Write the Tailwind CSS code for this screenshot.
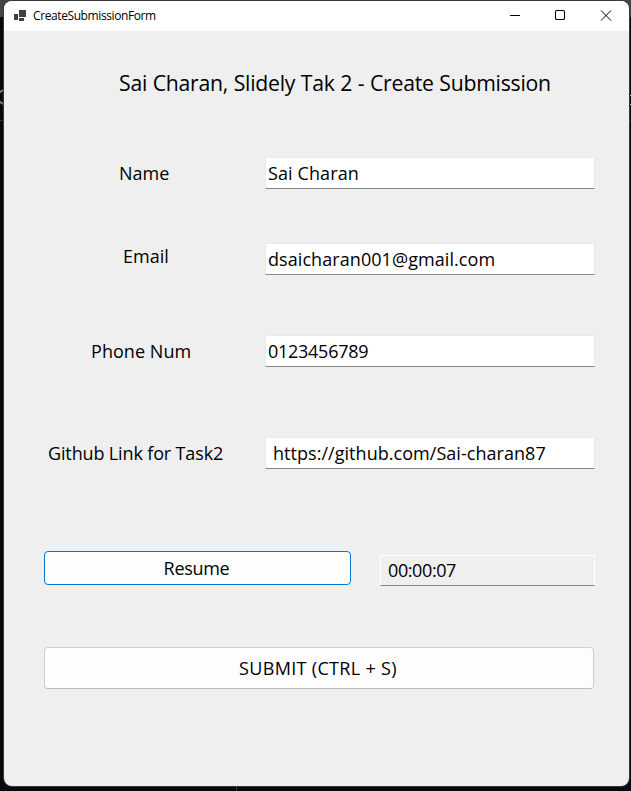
<!DOCTYPE html>
<html lang="en">
<head>
<meta charset="utf-8">
<title>CreateSubmissionForm</title>
<script src="https://cdn.jsdelivr.net/npm/@tailwindcss/browser@4"></script>
</head>
<body class="relative h-[791px] w-[631px] overflow-hidden bg-[#07090f] pt-px pl-[4px] font-['Open_Sans','Noto_Sans',sans-serif] text-[18px] text-black">
  <div class="absolute inset-x-0 top-0 h-[17px] bg-[#444444]"></div>
  <div class="absolute top-[89px] -left-[3px] size-[16px] rounded-full border-2 border-[#777b80]"></div>
  <div class="absolute top-[120px] left-0 h-px w-full bg-[#30343a]"></div>
  <div class="absolute top-[95px] right-0 h-[10px] w-[2px] border-y border-[#aaaaaa]"></div>
  <div class="absolute bottom-0 left-[236px] h-[5px] w-px bg-[#30343a]"></div>
  <main class="relative flex h-[785px] w-[625px] flex-col overflow-hidden rounded-lg bg-[#efefef] shadow-[0_0_0_1px_#393939]">
    <header class="flex h-[30px] shrink-0 items-center bg-white pl-[10px]">
      <svg class="size-[13px]" viewBox="0 0 13 13" fill="#404040"><path d="M5 0h7v7H5zM0 4h4v6H0zM5 8h5v3H5z"/></svg>
      <span class="ml-[6px] text-[12px] tracking-[-0.4px] whitespace-nowrap">CreateSubmissionForm</span>
      <svg class="ml-auto h-[30px] w-[138px]" viewBox="0 0 138 30" fill="none" stroke="#000"><path d="M19 14.5h10"/><rect x="64.5" y="9.5" width="9" height="9" rx="1.3" stroke-width="1.1"/><path d="M110 9.5l10 10M120 9.5l-10 10"/></svg>
    </header>
    <h1 class="mt-[36px] ml-[115px] h-[32px] origin-left scale-x-[0.943] text-[22.5px] leading-[32px] tracking-[-0.25px] [word-spacing:0.3px] whitespace-nowrap">Sai Charan, Slidely Tak 2 - Create Submission</h1>
    <div class="mt-[57px] flex h-[33px] pt-px whitespace-nowrap">
      <div class="w-[261px] pl-[115px] leading-[33px]">Name</div>
      <div class="h-[32px] w-[330px] border border-[#e9e9e9] border-b-[#868686] bg-white pl-[2px] leading-[31px] tracking-[0.1px]">Sai Charan</div>
    </div>
    <div class="mt-[53px] flex h-[33px] pt-px whitespace-nowrap">
      <div class="w-[261px] pl-[119px] leading-[27px]">Email</div>
      <div class="h-[32px] w-[330px] border border-[#e9e9e9] border-b-[#868686] bg-white pl-[2px] leading-[31px] tracking-[0.07px]">dsaicharan001@gmail.com</div>
    </div>
    <div class="mt-[59px] flex h-[33px] pt-px whitespace-nowrap">
      <div class="w-[261px] pl-[87px] leading-[33px] tracking-[0.05px]">Phone Num</div>
      <div class="h-[32px] w-[330px] border border-[#e9e9e9] border-b-[#868686] bg-white pl-[2px] leading-[31px] tracking-[-0.27px]">0123456789</div>
    </div>
    <div class="mt-[69px] flex h-[33px] pt-px whitespace-nowrap">
      <div class="w-[261px] pl-[44px] leading-[33px] tracking-[-0.14px]">Github Link for Task2</div>
      <div class="h-[32px] w-[330px] border border-[#e9e9e9] border-b-[#868686] bg-white pl-[7px] leading-[31px] tracking-[0.04px]">https://github.com/Sai-charan87</div>
    </div>
    <div class="mt-[82px] ml-[40px] flex h-[35px] items-start gap-[29px]">
      <button class="h-[34px] w-[307px] rounded-[4px] border border-[#0078d4] bg-[#fdfdfd] pr-[2px] leading-[32px] tracking-[-0.3px]">Resume</button>
      <div class="mt-[4px] h-[31px] w-[215px] border border-white border-b-[#868686] pl-[7px] leading-[29px] tracking-[-0.4px]">00:00:07</div>
    </div>
    <button class="mt-[61px] ml-[40px] h-[42px] w-[550px] shrink-0 rounded-[4px] border border-[#d0d0d0] border-b-[#bbbbbb] bg-[#fdfdfd] pr-[2px] leading-[40px] tracking-[0.33px]">SUBMIT (CTRL + S)</button>
  </main>
</body>
</html>
